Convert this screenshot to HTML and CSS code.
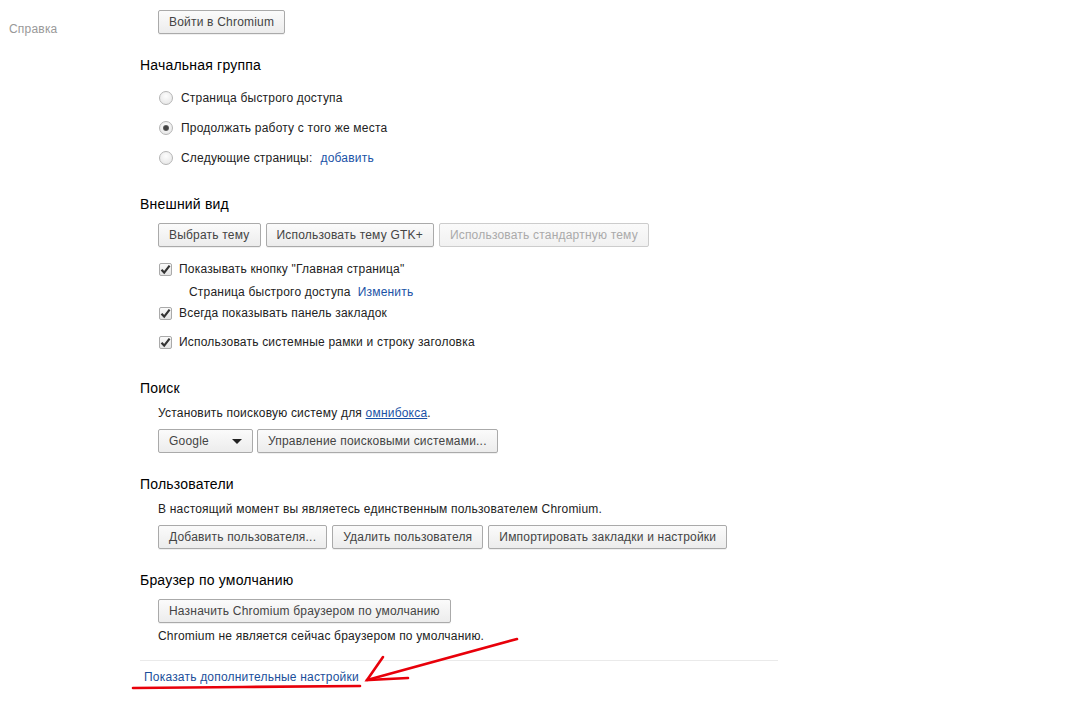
FILE: index.html
```html
<!DOCTYPE html>
<html>
<head lang="ru">
    <meta charset="UTF-8">
    <title>Настройки</title>
    <link rel="stylesheet" href="styles.css">
</head>
<body>
<div class="page">
    <div class="nav">
        <div class="nav-item">Справка</div>
    </div>
    <div class="main">
        <section class="sect sect-signin">
            <button class="btn">Войти в Chromium</button>
        </section>

        <section class="sect sect-start">
            <h3 class="sect-title">Начальная группа</h3>
            <div class="sect-body">
                <div class="radio-row"><span class="radio"></span>Страница быстрого доступа</div>
                <div class="radio-row"><span class="radio checked"></span>Продолжать работу с того же места</div>
                <div class="radio-row"><span class="radio"></span>Следующие страницы:<a class="link" href="#">добавить</a></div>
            </div>
        </section>

        <section class="sect sect-look">
            <h3 class="sect-title">Внешний вид</h3>
            <div class="sect-body">
                <div class="btn-row">
                    <button class="btn">Выбрать тему</button>
                    <button class="btn">Использовать тему GTK+</button>
                    <button class="btn" disabled>Использовать стандартную тему</button>
                </div>
                <div class="check-row first"><span class="check"><svg width="11" height="11" viewBox="0 0 11 11"><path d="M1.5 5.8 L4.2 8.6 L9.6 1.6" fill="none" stroke="#333" stroke-width="2.2"/></svg></span>Показывать кнопку "Главная страница"</div>
                <div class="sub-row">Страница быстрого доступа<a class="link" href="#">Изменить</a></div>
                <div class="check-row"><span class="check"><svg width="11" height="11" viewBox="0 0 11 11"><path d="M1.5 5.8 L4.2 8.6 L9.6 1.6" fill="none" stroke="#333" stroke-width="2.2"/></svg></span>Всегда показывать панель закладок</div>
                <div class="check-row last"><span class="check"><svg width="11" height="11" viewBox="0 0 11 11"><path d="M1.5 5.8 L4.2 8.6 L9.6 1.6" fill="none" stroke="#333" stroke-width="2.2"/></svg></span>Использовать системные рамки и строку заголовка</div>
            </div>
        </section>

        <section class="sect sect-search">
            <h3 class="sect-title">Поиск</h3>
            <div class="sect-body">
                <div class="text-row">Установить поисковую систему для <a class="link under" href="#">омнибокса</a>.</div>
                <div class="btn-row">
                    <div class="select">Google<span class="select-arrow"></span></div>
                    <button class="btn">Управление поисковыми системами...</button>
                </div>
            </div>
        </section>

        <section class="sect sect-users">
            <h3 class="sect-title">Пользователи</h3>
            <div class="sect-body">
                <div class="text-row">В настоящий момент вы являетесь единственным пользователем Chromium.</div>
                <div class="btn-row">
                    <button class="btn">Добавить пользователя...</button>
                    <button class="btn">Удалить пользователя</button>
                    <button class="btn">Импортировать закладки и настройки</button>
                </div>
            </div>
        </section>

        <section class="sect sect-default">
            <h3 class="sect-title">Браузер по умолчанию</h3>
            <div class="sect-body">
                <div class="btn-row">
                    <button class="btn">Назначить Chromium браузером по умолчанию</button>
                </div>
                <div class="text-row note">Chromium не является сейчас браузером по умолчанию.</div>
            </div>
        </section>

        <div class="advanced">
            <a class="link" href="#">Показать дополнительные настройки</a>
        </div>
    </div>
</div>
<!-- red marks drawn over the page -->
<svg class="marks" width="1070" height="708" viewBox="0 0 1070 708">
    <g fill="none" stroke="#e8000a" stroke-width="2.6" stroke-linecap="round">
        <path d="M133 688 L243 687 L360 686"/>
        <path d="M517 639 L367 680"/>
        <path d="M383 657 L367 680 L408 678"/>
    </g>
</svg>
</body>
</html>
```

FILE: styles.css
```css
body{
    margin: 0;
    background: #fff;
    font: 12px "Liberation Sans", Arial, sans-serif;
    letter-spacing: 0.2px;
    color: #222;
}
.page{
    display: flex;
    width: 1070px;
    height: 708px;
    overflow: hidden;
}
.nav{
    width: 140px;
    flex: none;
}
.nav-item{
    padding: 21px 0 0 9px;
    line-height: 16px;
    color: #999;
}
.main{
    width: 638px;
}
.sect{
    margin-top: 21px;
}
.sect-signin{
    margin-top: 10px;
    padding-left: 18px;
}
.sect-title{
    margin: 0;
    font-size: 14px;
    font-weight: normal;
    line-height: 20px;
    color: #000;
}
.sect-body{
    padding-left: 18px;
}
.btn{
    height: 24px;
    margin: 0;
    padding: 0 10px;
    border: 1px solid #aaa;
    border-radius: 2px;
    background: linear-gradient(#fbfbfb, #ececec);
    box-shadow: 0 1px 0 rgba(0,0,0,0.06);
    font: 12px "Liberation Sans", Arial, sans-serif;
    letter-spacing: 0.2px;
    color: #444;
    cursor: pointer;
}
.btn:disabled{
    border-color: #ccc;
    color: #aaa;
    background: linear-gradient(#fafafa, #f1f1f1);
    box-shadow: none;
}
.btn-row{
    display: flex;
    gap: 5px;
    height: 24px;
}
.link{
    color: #1a52a6;
    text-decoration: none;
}
.link.under{
    text-decoration: underline;
}

.sect-start .sect-body{
    padding-top: 8px;
}
.radio-row{
    display: flex;
    align-items: center;
    height: 30px;
}
.radio-row .link{
    margin-left: 8px;
}
.radio{
    width: 12px;
    height: 12px;
    margin: 0 8px 0 1px;
    border: 1px solid #b5b5b5;
    border-radius: 50%;
    background: radial-gradient(circle at 50% 35%, #fdfdfd, #e3e3e3);
    box-sizing: content-box;
    position: relative;
}
.radio.checked::after{
    content: "";
    position: absolute;
    left: 3px;
    top: 3px;
    width: 6px;
    height: 6px;
    border-radius: 50%;
    background: radial-gradient(circle, #444 40%, #888 100%);
}

.sect-look .sect-body{
    padding-top: 9px;
}
.check-row{
    display: flex;
    align-items: center;
    height: 22px;
}
.check-row.first{
    margin-top: 11px;
}
.check-row.last{
    margin-top: 7px;
}
.check{
    display: flex;
    align-items: center;
    justify-content: center;
    width: 11px;
    height: 11px;
    margin: 0 7px 0 1px;
    border: 1px solid #aaa;
    border-radius: 2px;
    background: linear-gradient(#fafafa, #e4e4e4);
}
.sub-row{
    height: 20px;
    margin-top: 2px;
    line-height: 20px;
    padding-left: 31px;
}
.sub-row .link{
    margin-left: 7px;
}

.sect-search{
    margin-top: 25px;
}
.text-row{
    margin-top: 5px;
    line-height: 20px;
    margin-bottom: 6px;
}
.select{
    display: flex;
    align-items: center;
    justify-content: space-between;
    width: 73px;
    height: 22px;
    padding: 0 10px;
    box-sizing: content-box;
    border: 1px solid #aaa;
    border-radius: 2px;
    background: linear-gradient(#fbfbfb, #ececec);
    color: #444;
    margin-right: -1px;
}
.select-arrow{
    width: 0;
    height: 0;
    border-left: 5px solid transparent;
    border-right: 5px solid transparent;
    border-top: 5px solid #222;
}

.sect-default .sect-body{
    padding-top: 9px;
}
.text-row.note{
    margin-top: 3px;
}

.advanced{
    margin-top: 14px;
    border-top: 1px solid #eaeaea;
    padding: 6px 0 0 4px;
    line-height: 20px;
}
.advanced .link{
    color: #1b4f9b;
}

.marks{
    position: absolute;
    left: 0;
    top: 0;
    pointer-events: none;
}
```
